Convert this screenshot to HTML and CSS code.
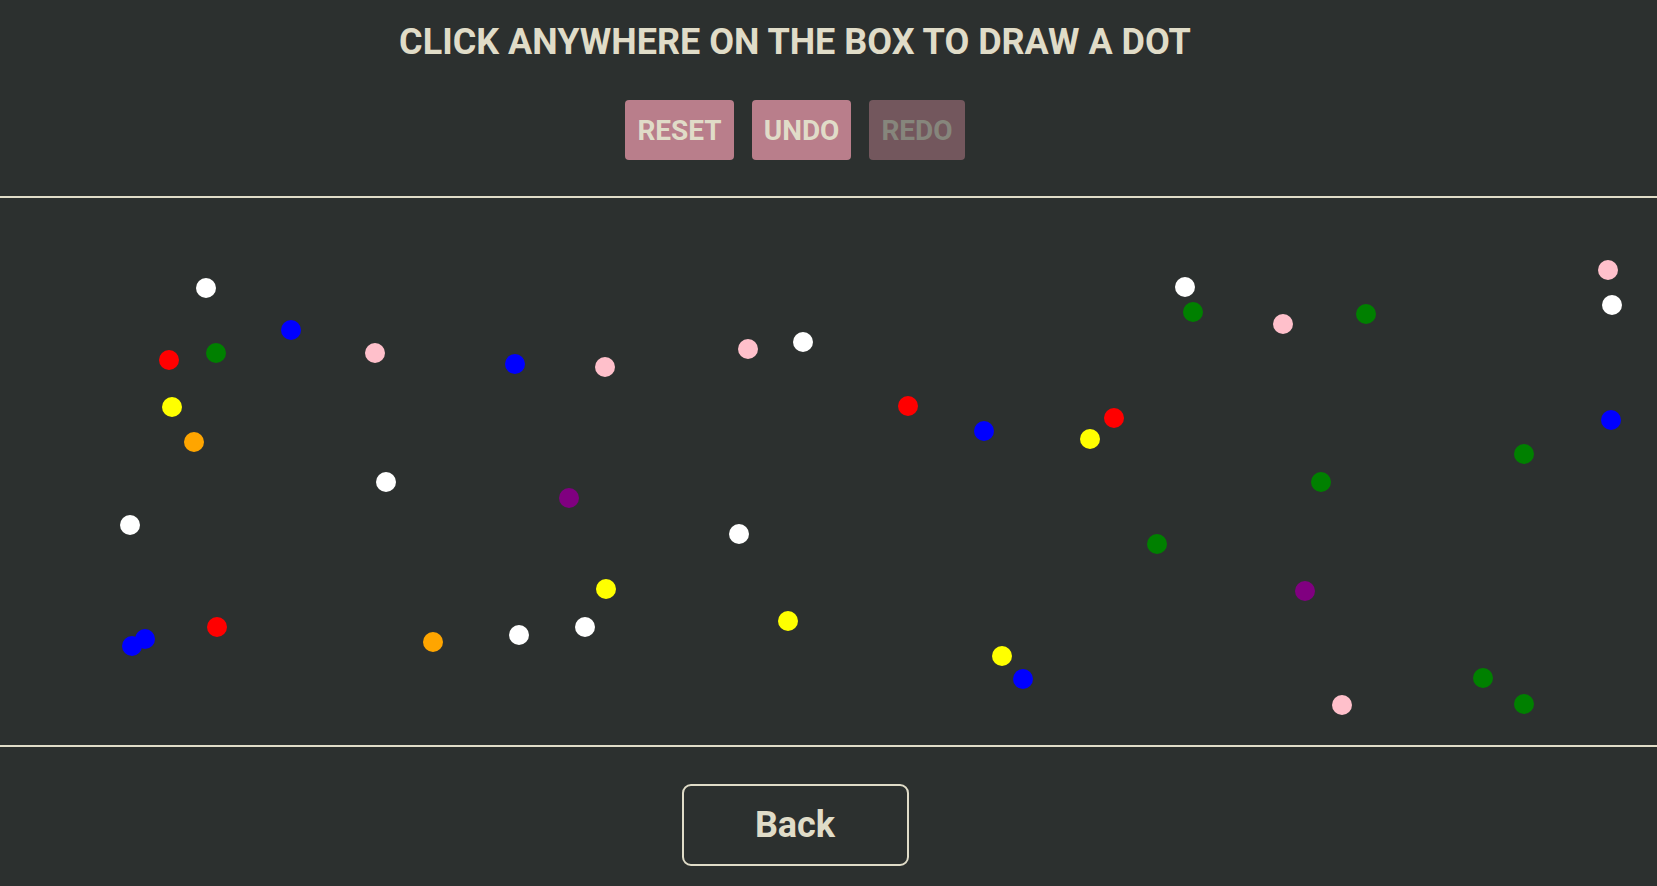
FILE: index.html
```html
<!DOCTYPE html>
<html lang="en">
<head>
<meta charset="utf-8">
<title>Draw a dot</title>
<link rel="stylesheet" href="styles.css">
</head>
<body>
<header class="header">
  <h1 class="title">CLICK ANYWHERE ON THE BOX TO DRAW A DOT</h1>
  <div class="controls">
    <button class="ctl">RESET</button>
    <button class="ctl">UNDO</button>
    <button class="ctl ctl-disabled" disabled>REDO</button>
  </div>
</header>
<main class="board">
  <svg class="canvas" width="1657" height="547" viewBox="0 198 1657 547" xmlns="http://www.w3.org/2000/svg">
    <circle cx="206" cy="288" r="10" fill="white"/>
    <circle cx="291" cy="330" r="10" fill="blue"/>
    <circle cx="169" cy="360" r="10" fill="red"/>
    <circle cx="216" cy="353" r="10" fill="green"/>
    <circle cx="375" cy="353" r="10" fill="pink"/>
    <circle cx="515" cy="364" r="10" fill="blue"/>
    <circle cx="605" cy="367" r="10" fill="pink"/>
    <circle cx="748" cy="349" r="10" fill="pink"/>
    <circle cx="803" cy="342" r="10" fill="white"/>
    <circle cx="172" cy="407" r="10" fill="yellow"/>
    <circle cx="194" cy="442" r="10" fill="orange"/>
    <circle cx="386" cy="482" r="10" fill="white"/>
    <circle cx="569" cy="498" r="10" fill="purple"/>
    <circle cx="130" cy="525" r="10" fill="white"/>
    <circle cx="739" cy="534" r="10" fill="white"/>
    <circle cx="908" cy="406" r="10" fill="red"/>
    <circle cx="984" cy="431" r="10" fill="blue"/>
    <circle cx="1090" cy="439" r="10" fill="yellow"/>
    <circle cx="1114" cy="418" r="10" fill="red"/>
    <circle cx="1185" cy="287" r="10" fill="white"/>
    <circle cx="1193" cy="312" r="10" fill="green"/>
    <circle cx="1283" cy="324" r="10" fill="pink"/>
    <circle cx="1366" cy="314" r="10" fill="green"/>
    <circle cx="1608" cy="270" r="10" fill="pink"/>
    <circle cx="1612" cy="305" r="10" fill="white"/>
    <circle cx="1611" cy="420" r="10" fill="blue"/>
    <circle cx="1524" cy="454" r="10" fill="green"/>
    <circle cx="1321" cy="482" r="10" fill="green"/>
    <circle cx="1157" cy="544" r="10" fill="green"/>
    <circle cx="1305" cy="591" r="10" fill="purple"/>
    <circle cx="606" cy="589" r="10" fill="yellow"/>
    <circle cx="132" cy="646" r="10" fill="blue"/>
    <circle cx="145" cy="639" r="10" fill="blue"/>
    <circle cx="217" cy="627" r="10" fill="red"/>
    <circle cx="433" cy="642" r="10" fill="orange"/>
    <circle cx="519" cy="635" r="10" fill="white"/>
    <circle cx="585" cy="627" r="10" fill="white"/>
    <circle cx="788" cy="621" r="10" fill="yellow"/>
    <circle cx="1002" cy="656" r="10" fill="yellow"/>
    <circle cx="1023" cy="679" r="10" fill="blue"/>
    <circle cx="1342" cy="705" r="10" fill="pink"/>
    <circle cx="1483" cy="678" r="10" fill="green"/>
    <circle cx="1524" cy="704" r="10" fill="green"/>
  </svg>
</main>
<footer class="footer">
  <button class="back">Back</button>
</footer>
</body>
</html>
```
FILE: styles.css
```css
* { box-sizing: border-box; }

html, body {
  margin: 0;
  padding: 0;
  background: #2c302f;
  height: 100%;
  overflow: hidden;
}

body {
  font-family: Roboto, "Liberation Sans", Arial, sans-serif;
  color: #e0dcc8;
}

.header {
  width: 1590px;
  display: flex;
  flex-direction: column;
  align-items: center;
  padding-top: 21px;
}

.title {
  margin: 0;
  font-size: 36px;
  line-height: 42px;
  font-weight: 700;
  color: #e0dcc8;
}

.controls {
  display: flex;
  gap: 18px;
  margin-top: 37px;
}

.ctl {
  height: 60px;
  padding: 0 12px;
  border: none;
  border-radius: 4px;
  background: #b97e8b;
  color: #e0dcc8;
  font-family: inherit;
  font-size: 28px;
  font-weight: 700;
  cursor: pointer;
}

.ctl-disabled {
  opacity: 0.5;
  cursor: default;
}

.board {
  margin-top: 36px;
  border-top: 2px solid #e0dcc8;
  border-bottom: 2px solid #e0dcc8;
  height: 551px;
}

.canvas {
  display: block;
}

.footer {
  width: 1590px;
  display: flex;
  justify-content: center;
  margin-top: 37px;
}

.back {
  width: 227px;
  height: 82px;
  border: 2px solid #e0dcc8;
  border-radius: 9px;
  background: transparent;
  color: #e0dcc8;
  font-family: inherit;
  font-size: 36px;
  font-weight: 700;
  cursor: pointer;
}
```
